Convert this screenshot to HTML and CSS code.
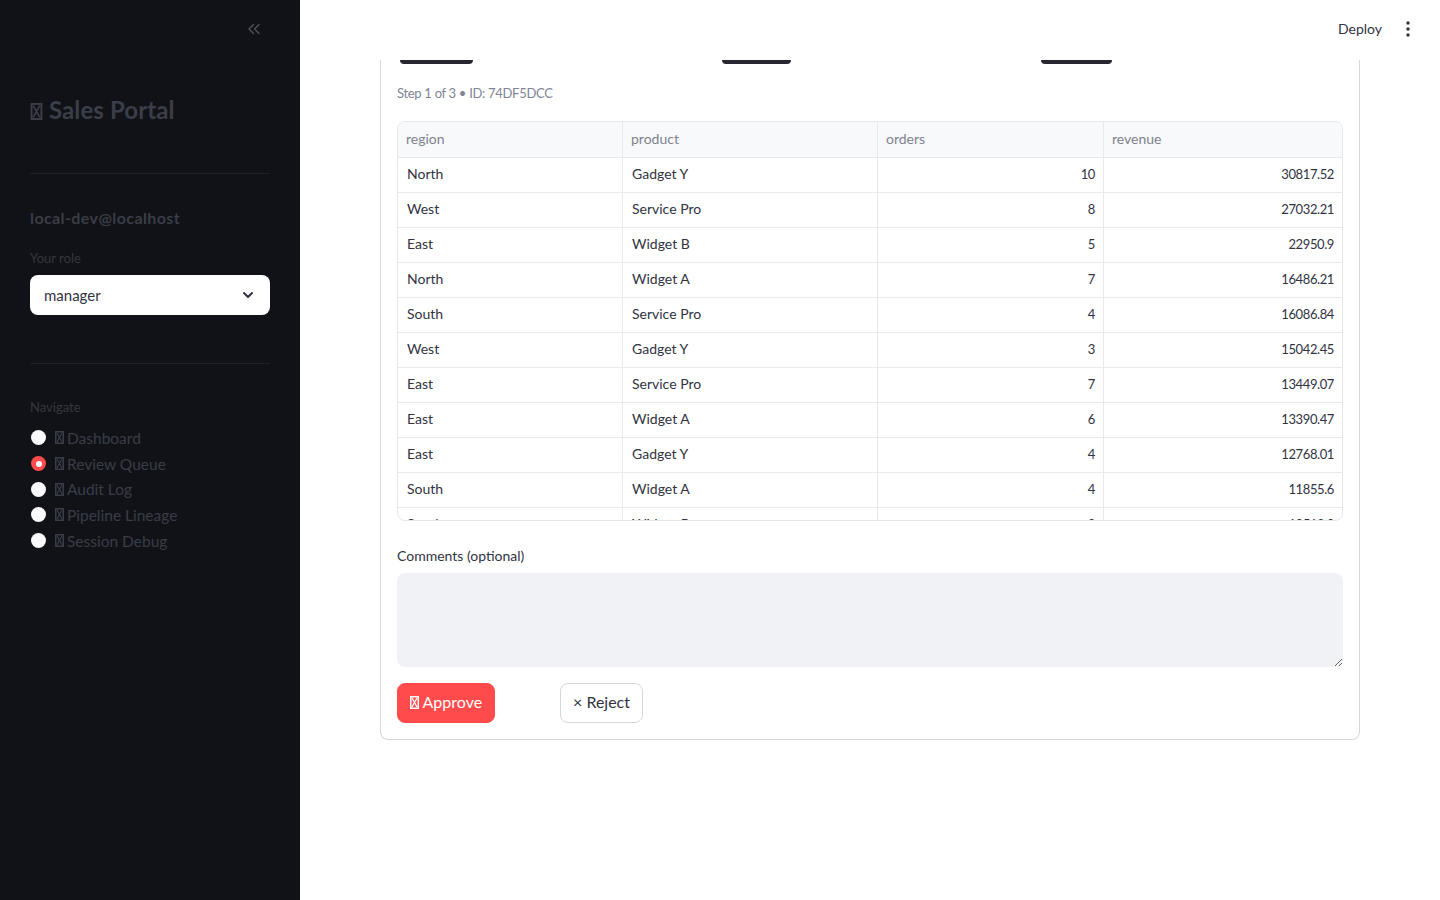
FILE: index.html
```html
<!DOCTYPE html>
<html lang="en">
<head>
<meta charset="utf-8">
<title>Sales Portal</title>
<link rel="stylesheet" href="styles.css">
</head>
<body>
<div class="app">
  <aside class="sidebar">
    <div class="collapse-row">
      <svg class="chev" width="14" height="12" viewBox="0 0 14 12"><path d="M6.5 1.5 2 6l4.5 4.5M12 1.5 7.5 6l4.5 4.5" fill="none" stroke="currentColor" stroke-width="1.4" stroke-linecap="round" stroke-linejoin="round"/></svg>
    </div>
    <h1 class="side-title"><svg class="tofu" viewBox="0 0 9 13"><rect x="0.75" y="0.75" width="7.5" height="11.5" fill="none" stroke="currentColor" stroke-width="1.5"/><path d="M2 2l5 9M7 2l-5 9" stroke="currentColor" stroke-width="1.3"/></svg> Sales Portal</h1>
    <hr class="side-hr">
    <div class="user">local-dev@localhost</div>
    <div class="side-label">Your role</div>
    <div class="select">
      <span>manager</span>
      <svg width="14" height="14" viewBox="0 0 14 14"><path d="M3 5l4 4 4-4" fill="none" stroke="#31333f" stroke-width="2" stroke-linecap="round" stroke-linejoin="round"/></svg>
    </div>
    <hr class="side-hr second">
    <div class="side-label nav-label">Navigate</div>
    <ul class="radios">
      <li><span class="radio"></span><svg class="tofu" viewBox="0 0 9 13"><rect x="0.75" y="0.75" width="7.5" height="11.5" fill="none" stroke="currentColor" stroke-width="1.5"/><path d="M2 2l5 9M7 2l-5 9" stroke="currentColor" stroke-width="1.3"/></svg> Dashboard</li>
      <li><span class="radio on"></span><svg class="tofu" viewBox="0 0 9 13"><rect x="0.75" y="0.75" width="7.5" height="11.5" fill="none" stroke="currentColor" stroke-width="1.5"/><path d="M2 2l5 9M7 2l-5 9" stroke="currentColor" stroke-width="1.3"/></svg> Review Queue</li>
      <li><span class="radio"></span><svg class="tofu" viewBox="0 0 9 13"><rect x="0.75" y="0.75" width="7.5" height="11.5" fill="none" stroke="currentColor" stroke-width="1.5"/><path d="M2 2l5 9M7 2l-5 9" stroke="currentColor" stroke-width="1.3"/></svg> Audit Log</li>
      <li><span class="radio"></span><svg class="tofu" viewBox="0 0 9 13"><rect x="0.75" y="0.75" width="7.5" height="11.5" fill="none" stroke="currentColor" stroke-width="1.5"/><path d="M2 2l5 9M7 2l-5 9" stroke="currentColor" stroke-width="1.3"/></svg> Pipeline Lineage</li>
      <li><span class="radio"></span><svg class="tofu" viewBox="0 0 9 13"><rect x="0.75" y="0.75" width="7.5" height="11.5" fill="none" stroke="currentColor" stroke-width="1.5"/><path d="M2 2l5 9M7 2l-5 9" stroke="currentColor" stroke-width="1.3"/></svg> Session Debug</li>
    </ul>
  </aside>
  <main class="main">
    <header class="topbar">
      <span class="deploy">Deploy</span>
      <svg class="kebab" width="4" height="16" viewBox="0 0 4 16"><circle cx="2" cy="2" r="1.7" fill="#31333f"/><circle cx="2" cy="8" r="1.7" fill="#31333f"/><circle cx="2" cy="14" r="1.7" fill="#31333f"/></svg>
    </header>
    <section class="card">
      <div class="bars">
        <div class="col"><span class="bar b1"></span></div>
        <div class="col"><span class="bar b2"></span></div>
        <div class="col"><span class="bar b3"></span></div>
      </div>
      <p class="step">Step 1 of 3 • ID: 74DF5DCC</p>
      <div class="grid">
        <div class="row head"><div>region</div><div>product</div><div>orders</div><div>revenue</div></div>
        <div class="row"><div>North</div><div>Gadget Y</div><div class="num">10</div><div class="num">30817.52</div></div>
        <div class="row"><div>West</div><div>Service Pro</div><div class="num">8</div><div class="num">27032.21</div></div>
        <div class="row"><div>East</div><div>Widget B</div><div class="num">5</div><div class="num">22950.9</div></div>
        <div class="row"><div>North</div><div>Widget A</div><div class="num">7</div><div class="num">16486.21</div></div>
        <div class="row"><div>South</div><div>Service Pro</div><div class="num">4</div><div class="num">16086.84</div></div>
        <div class="row"><div>West</div><div>Gadget Y</div><div class="num">3</div><div class="num">15042.45</div></div>
        <div class="row"><div>East</div><div>Service Pro</div><div class="num">7</div><div class="num">13449.07</div></div>
        <div class="row"><div>East</div><div>Widget A</div><div class="num">6</div><div class="num">13390.47</div></div>
        <div class="row"><div>East</div><div>Gadget Y</div><div class="num">4</div><div class="num">12768.01</div></div>
        <div class="row"><div>South</div><div>Widget A</div><div class="num">4</div><div class="num">11855.6</div></div>
        <div class="row"><div>South</div><div>Widget B</div><div class="num">3</div><div class="num">10512.3</div></div>
      </div>
      <label class="comments-label">Comments (optional)</label>
      <textarea class="comments"></textarea>
      <div class="actions">
        <div><button class="btn primary"><svg class="tofu" viewBox="0 0 9 13"><rect x="0.75" y="0.75" width="7.5" height="11.5" fill="none" stroke="currentColor" stroke-width="1.5"/><path d="M2 2l5 9M7 2l-5 9" stroke="currentColor" stroke-width="1.3"/></svg> Approve</button></div>
        <div><button class="btn secondary">× Reject</button></div>
      </div>
    </section>
  </main>
</div>
</body>
</html>
```

FILE: styles.css
```css
* { box-sizing: border-box; }
html, body { margin: 0; padding: 0; }
body {
  font-family: Lato, "Noto Sans", "Liberation Sans", sans-serif;
  color: #31333f;
  background: #ffffff;
}
.app { display: flex; min-height: 900px; }

.tofu {
  display: inline-block;
  width: 0.55em;
  height: 0.78em;
  vertical-align: -0.06em;
}

.sidebar {
  width: 300px;
  flex: none;
  background: #111217;
  padding: 0 30px;
  min-height: 900px;
}
.collapse-row {
  height: 60px;
  display: flex;
  justify-content: flex-end;
  align-items: center;
  padding-right: 9px;
  color: #50535d;
}
.chev { display: block; margin-top: -2px; }
.side-title {
  margin: 34px 0 0;
  font-size: 24px;
  line-height: 32px;
  font-weight: 700;
  color: #3b3e48;
  letter-spacing: 0.1px;
}
.side-title .tofu { width: 13px; height: 17px; vertical-align: -1px; }
.side-hr {
  border: none;
  border-top: 1px solid #1f2128;
  margin: 47px 0 0;
}
.side-hr.second { margin-top: 48px; }
.user {
  margin-top: 33px;
  font-size: 16px;
  line-height: 22px;
  font-weight: 700;
  color: #3a3d46;
  letter-spacing: 0.4px;
}
.side-label {
  margin-top: 20px;
  font-size: 13px;
  line-height: 18px;
  color: #34373f;
}
.select {
  margin-top: 8px;
  height: 40px;
  background: #ffffff;
  border-radius: 8px;
  display: flex;
  align-items: center;
  justify-content: space-between;
  padding: 0 15px 0 14px;
  font-size: 15px;
  color: #31333f;
}
.nav-label { margin-top: 34px; }
.radios { list-style: none; margin: 9px 0 0; padding: 0; }
.radios li {
  display: flex;
  align-items: center;
  height: 25.7px;
  font-size: 15.5px;
  color: #3a3d47;
}
.radio {
  width: 15px;
  height: 15px;
  border-radius: 50%;
  background: #f9f9fb;
  margin: 0 9px 0 1px;
  flex: none;
  display: inline-flex;
  align-items: center;
  justify-content: center;
}
.radio.on { background: #ff4b4b; }
.radio.on::after {
  content: "";
  width: 6px;
  height: 6px;
  border-radius: 50%;
  background: #ffffff;
}
.radios .tofu { width: 9px; height: 13px; margin-right: 3px; }

.main { flex: 1; padding: 0 80px; }
.topbar {
  height: 60px;
  display: flex;
  align-items: center;
  justify-content: flex-end;
  margin-right: -80px;
  padding: 0 30px 2px 0;
}
.deploy { font-size: 14px; color: #31333f; margin-right: 24px; padding-bottom: 1px; }
.kebab { display: block; }

.card {
  border: 1px solid #d6d7db;
  border-top: none;
  border-radius: 0 0 8px 8px;
  padding: 0 16px 16px;
}
.bars { display: grid; grid-template-columns: 1fr 1fr 1fr; gap: 16px; height: 4px; }
.bar { display: block; height: 4px; background: #262730; border-radius: 0 0 6px 6px; }
.b1 { width: 73px; margin-left: 3px; }
.b2 { width: 69px; margin-left: 4px; }
.b3 { width: 71px; margin-left: 3px; }

.step {
  margin: 18px 0 0;
  font-size: 13px;
  letter-spacing: -0.3px;
  line-height: 22px;
  color: #808495;
}
.grid {
  margin-top: 17px;
  height: 400px;
  overflow: hidden;
  border: 1px solid #e6e7eb;
  border-radius: 8px;
}
.row {
  display: grid;
  grid-template-columns: 225px 255px 226px 1fr;
  height: 35px;
  border-bottom: 1px solid #e9eaed;
  font-size: 14px;
}
.row > div {
  display: flex;
  align-items: center;
  padding: 0 8px 3px 9px;
  border-right: 1px solid #e9eaed;
  color: #31333f;
}
.row > div:last-child { border-right: none; }
.row > div.num { justify-content: flex-end; font-size: 13px; letter-spacing: -0.4px; padding-bottom: 2px; }
.row.head { height: 36px; background: #f8f9fb; }
.row.head > div { color: #7f828e; padding-left: 8px; padding-bottom: 2px; }

.comments-label {
  display: block;
  margin-top: 24px;
  font-size: 14px;
  line-height: 22px;
  color: #31333f;
}
.comments {
  display: block;
  width: 100%;
  height: 94px;
  margin-top: 6px;
  background: #f0f2f6;
  border: none;
  border-radius: 8px;
  resize: vertical;
  font-family: inherit;
}
.actions {
  margin-top: 16px;
  display: grid;
  grid-template-columns: 147px auto;
  gap: 16px;
}
.btn {
  height: 40px;
  border-radius: 8px;
  font-family: inherit;
  font-size: 16px;
  padding: 0 12px 3px;
}
.btn .tofu { width: 9px; height: 13px; vertical-align: -1px; }
.btn.primary { background: #ff4b4b; color: #ffffff; border: 1px solid #ff4b4b; }
.btn.secondary { background: #ffffff; color: #31333f; border: 1px solid #d6d7db; }
```
